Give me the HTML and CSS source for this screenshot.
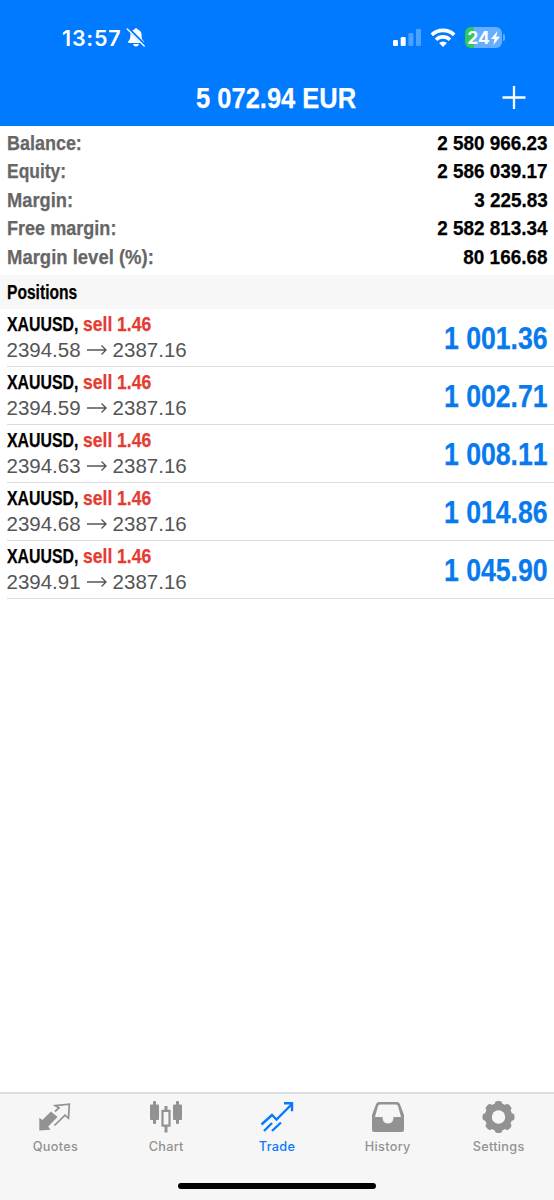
FILE: index.html
```html
<!DOCTYPE html>
<html lang="en">
<head>
<meta charset="utf-8">
<title>Trade</title>
<link rel="stylesheet" href="styles.css">
</head>
<body>
<div class="app">
  <header class="top">
    <div class="status">
      <div class="clock"><span>13:57</span>
        <svg width="20" height="21" viewBox="0 0 20 21"><path d="M10 1.200c1 0 1.500.6 1.600 1.400 2.500.7 4 2.600 4 5.400 0 4 .8 4.800 2 6.100.7.9.3 1.900-.8 1.900H3.200c-1.100 0-1.500-1-.8-1.900 1.200-1.300 2-2.100 2-6.100 0-2.800 1.500-4.700 4-5.400.1-.8.6-1.400 1.600-1.400zM7 17h6c-.3 1.500-1.400 2.400-3 2.400S7.300 18.500 7 17z" fill="#fff"/><path d="M2.200 1.600L19 18.400" stroke="#007aff" stroke-width="3.200"/><path d="M1.300 2L18.200 18.900" stroke="#fff" stroke-width="1.400" stroke-linecap="round"/></svg>
      </div>
      <div class="signals">
        <svg width="28" height="19" viewBox="0 0 28 19" fill="#fff"><rect x="0" y="12" width="5" height="6" rx="1.300"/><rect x="7.700" y="9" width="5" height="9" rx="1.300"/><rect x="15.400" y="5" width="5" height="13" rx="1.300" opacity=".3"/><rect x="23" y="1" width="5" height="17" rx="1.300" opacity=".3"/></svg>
        <svg class="wifi" width="26" height="20" viewBox="0 0 26 20" fill="none" stroke="#fff" stroke-width="3.600"><path d="M1.800 6.900a16 16 0 0 1 22.400 0"/><path d="M6 11.700a10 10 0 0 1 14 0"/><path d="M13 19l-3.900-3.900a5.600 5.600 0 0 1 7.800 0z" fill="#fff" stroke="none"/></svg>
        <div class="battery"><span>24</span><svg width="9" height="14" viewBox="0 0 9 14"><path d="M6.500 0L0 8h3.600L2.300 14 9 5.700H5.200z" fill="#fff"/></svg></div><i class="nub"></i>
      </div>
    </div>
    <div class="titlebar">
      <h1 class="fit">5 072.94 EUR</h1>
      <svg class="plus" width="24" height="24" viewBox="0 0 24 24"><path d="M12 0v23M.5 11.500h23" stroke="#fff" stroke-width="2.300"/></svg>
    </div>
  </header>
  <dl class="summary">
    <div><dt class="fit balance">Balance:</dt><dd class="fit">2 580 966.23</dd></div>
    <div><dt class="fit equity">Equity:</dt><dd class="fit">2 586 039.17</dd></div>
    <div><dt class="fit">Margin:</dt><dd class="fit">3 225.83</dd></div>
    <div><dt class="fit free">Free margin:</dt><dd class="fit">2 582 813.34</dd></div>
    <div><dt class="fit level">Margin level (%):</dt><dd class="fit">80 166.68</dd></div>
  </dl>
  <h2 class="section"><span class="fit">Positions</span></h2>
  <ul class="positions">
    <li><div class="deal"><div class="name"><b class="fit symbol">XAUUSD,</b><b class="fit side">sell 1.46</b></div><div class="prices"><span>2394.58</span><svg class="arrow" width="20" height="12" viewBox="0 0 20 12"><path d="M0 6h19M14.500 1.500L19 6l-4.500 4.500"/></svg><span>2387.16</span></div></div><b class="fit profit">1 001.36</b></li>
    <li><div class="deal"><div class="name"><b class="fit symbol">XAUUSD,</b><b class="fit side">sell 1.46</b></div><div class="prices"><span>2394.59</span><svg class="arrow" width="20" height="12" viewBox="0 0 20 12"><path d="M0 6h19M14.500 1.500L19 6l-4.500 4.500"/></svg><span>2387.16</span></div></div><b class="fit profit">1 002.71</b></li>
    <li><div class="deal"><div class="name"><b class="fit symbol">XAUUSD,</b><b class="fit side">sell 1.46</b></div><div class="prices"><span>2394.63</span><svg class="arrow" width="20" height="12" viewBox="0 0 20 12"><path d="M0 6h19M14.500 1.500L19 6l-4.500 4.500"/></svg><span>2387.16</span></div></div><b class="fit profit">1 008.11</b></li>
    <li><div class="deal"><div class="name"><b class="fit symbol">XAUUSD,</b><b class="fit side">sell 1.46</b></div><div class="prices"><span>2394.68</span><svg class="arrow" width="20" height="12" viewBox="0 0 20 12"><path d="M0 6h19M14.500 1.500L19 6l-4.500 4.500"/></svg><span>2387.16</span></div></div><b class="fit profit">1 014.86</b></li>
    <li><div class="deal"><div class="name"><b class="fit symbol">XAUUSD,</b><b class="fit side">sell 1.46</b></div><div class="prices"><span>2394.91</span><svg class="arrow" width="20" height="12" viewBox="0 0 20 12"><path d="M0 6h19M14.500 1.500L19 6l-4.500 4.500"/></svg><span>2387.16</span></div></div><b class="fit profit">1 045.90</b></li>
  </ul>
  <footer class="bottom">
    <nav class="tabs">
      <div class="tab"><svg width="36" height="36" viewBox="0 0 36 36"><path d="M2.300 17.700l3 2.300 8.700-8.500 6.500 5.500-9.300 9.500 2.300 3.300-11.200.7z" fill="#929292"/><path d="M18 11.500l4-3.500-3.800-2.300L32.300 4.200l-.8 14-3.500-3L17.500 25.500" fill="none" stroke="#929292" stroke-width="1.700"/></svg><span>Quotes</span></div>
      <div class="tab"><svg width="36" height="36" viewBox="0 0 36 36" fill="#929292"><rect x="2" y="4.500" width="9" height="15.500" rx="1"/><rect x="5" y="1" width="3" height="23" rx="1"/><rect x="25" y="4.500" width="9" height="15.500" rx="1"/><rect x="28" y="1" width="3" height="23" rx="1"/><path d="M16.500 6h3v5h-3zM16.500 26h3v6.500h-3z"/><path d="M14.500 10.800h7v14.800h-7z" fill="none" stroke="#929292" stroke-width="2.200"/></svg><span>Chart</span></div>
      <div class="tab active"><svg width="36" height="36" viewBox="0 0 36 36" fill="none" stroke="#087aff" stroke-width="2.400"><path d="M2.500 24.500l10.500-9.500 4.500 4.500L33 4M25 3.200h8v8M5 31l8-8M13 31l9-8.500"/></svg><span>Trade</span></div>
      <div class="tab"><svg width="36" height="36" viewBox="0 0 36 36"><path fill-rule="evenodd" d="M9 2h18q2 0 2.900 2L34 15v15q0 2-2 2H4q-2 0-2-2V15L6.100 4Q7 2 9 2zM10 4.500q-1.500 0-2 1.500L5 17h7.500q0 6.500 5.500 6.500t5.500-6.500H31L28 6Q27.500 4.500 26 4.500z" fill="#929292"/></svg><span>History</span></div>
      <div class="tab"><svg width="36" height="36" viewBox="-17.500 -17 36 36"><g fill="#929292"><circle r="13.700"/><rect x="-3.800" y="-16" width="7.600" height="32" rx="3"/><rect x="-3.800" y="-16" width="7.600" height="32" rx="3" transform="rotate(45)"/><rect x="-3.800" y="-16" width="7.600" height="32" rx="3" transform="rotate(90)"/><rect x="-3.800" y="-16" width="7.600" height="32" rx="3" transform="rotate(135)"/></g><circle r="6.700" fill="#f6f6f6"/></svg><span>Settings</span></div>
    </nav>
    <div class="home"></div>
  </footer>
</div>
</body>
</html>
```
FILE: styles.css
```css
* { box-sizing: border-box; margin: 0; padding: 0; }
body { background: #fff; font-family: "Liberation Sans", Arial, sans-serif; }
svg { display: block; flex: none; }
.app { width: 554px; height: 1200px; display: flex; flex-direction: column; overflow: hidden; }
.fit { display: block; white-space: nowrap; transform: scaleX(var(--fit, 1)); transform-origin: left center; -webkit-text-stroke: .25px currentColor; }

.top { height: 126px; background: #007aff; color: #fff; flex: none; }
.status { height: 70px; padding: 5px 49px 0 62px; display: flex; justify-content: space-between; align-items: center; }
.clock { display: flex; align-items: center; gap: 5px; font: 600 21.500px/26px Inter, sans-serif; letter-spacing: .8px; }
.clock span { margin-right: -1px; }
.signals { display: flex; align-items: center; }
.wifi { margin-left: 9px; }
.battery { margin-left: 9px; width: 37px; height: 21px; border-radius: 6px; background: linear-gradient(90deg, #34c759 9px, #66afff 9px); display: flex; align-items: center; justify-content: center; gap: 1px; font: 700 17.500px/20px Inter, sans-serif; }
.nub { width: 2px; height: 7px; margin-left: 1px; border-radius: 0 2px 2px 0; background: #66afff; }
.titlebar { height: 56px; display: flex; align-items: center; justify-content: flex-end; padding: 0 28px 0 196px; }
.titlebar h1 { --fit: .85; font-size: 30px; line-height: 34px; margin-right: auto; }

.summary { padding: 3px 6.500px 0; height: 149px; font-weight: bold; font-size: 21px; line-height: 28.400px; }
.summary div { display: flex; justify-content: space-between; }
.summary dt { --fit: .87; color: #666; }
.summary .balance { --fit: .855; }
.summary .equity { --fit: .83; }
.summary .free { --fit: .86; }
.summary .level { --fit: .88; }
.summary dd { --fit: .9; transform-origin: right center; }
.section { height: 34px; padding-left: 6.500px; background: #f7f7f7; font-size: 20px; line-height: 34px; }
.section .fit { --fit: .78; }

.positions { list-style: none; }
.positions li { height: 58px; margin-left: 6.500px; padding-right: 6.500px; border-bottom: 1px solid #dcdcdc; display: flex; justify-content: space-between; align-items: center; }
.deal { margin-top: -3px; }
.name { height: 27px; display: flex; font-size: 21px; line-height: 27px; }
.symbol { --fit: .755; width: 76px; }
.side { --fit: .835; color: #e43c32; }
.prices { display: flex; align-items: center; height: 26px; font-size: 20.500px; line-height: 26px; color: #555; }
.arrow { margin: 0 6px; fill: none; stroke: #555; stroke-width: 1.400; }
.profit { --fit: .86; transform-origin: right center; margin-top: 2px; font-size: 31px; color: #087aee; font-kerning: none; }

.bottom { margin-top: auto; height: 108px; background: #f6f6f6; border-top: 2px solid #dfdfdf; display: flex; flex-direction: column; align-items: center; }
.tabs { width: 554px; height: 89px; padding-top: 6px; display: grid; grid-template-columns: repeat(5, 1fr); }
.tab { display: flex; flex-direction: column; align-items: center; color: #929292; font: 500 12.700px/21px Inter, sans-serif; letter-spacing: .3px; }
.tab.active { color: #087aff; }
.home { width: 198px; height: 6px; border-radius: 3px; background: #000; }
```
